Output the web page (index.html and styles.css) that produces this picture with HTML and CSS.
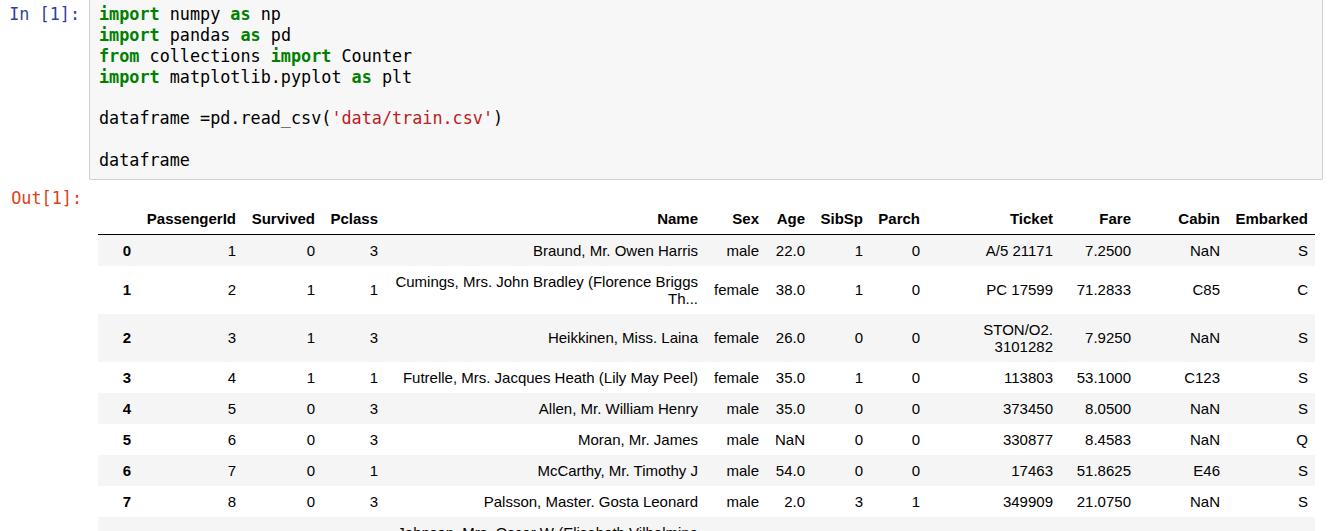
FILE: index.html
```html
<!DOCTYPE html>
<html>
<head>
<meta charset="utf-8">
<link rel="stylesheet" href="styles.css">
</head>
<body>
<div class="notebook">
  <div class="cell-row input-row">
    <div class="prompt in-prompt">In&nbsp;[1]:</div>
    <div class="input-area"><pre class="code"><span class="kw">import</span> numpy <span class="kw">as</span> np
<span class="kw">import</span> pandas <span class="kw">as</span> pd
<span class="kw">from</span> collections <span class="kw">import</span> Counter
<span class="kw">import</span> matplotlib.pyplot <span class="kw">as</span> plt

dataframe =pd.read_csv(<span class="str">'data/train.csv'</span>)

dataframe</pre></div>
  </div>
  <div class="cell-row output-row">
    <div class="prompt out-prompt">Out[1]:</div>
    <div class="output-area">
      <table class="dataframe">
        <colgroup>
          <col class="c-idx"><col class="c-pid"><col class="c-surv"><col class="c-pcl"><col class="c-name"><col class="c-sex"><col class="c-age"><col class="c-sib"><col class="c-par"><col class="c-tic"><col class="c-fare"><col class="c-cab"><col class="c-emb">
        </colgroup>
        <thead>
          <tr><th></th><th>PassengerId</th><th>Survived</th><th>Pclass</th><th>Name</th><th>Sex</th><th>Age</th><th>SibSp</th><th>Parch</th><th>Ticket</th><th>Fare</th><th>Cabin</th><th>Embarked</th></tr>
        </thead>
        <tbody>
          <tr><th>0</th><td>1</td><td>0</td><td>3</td><td>Braund, Mr. Owen Harris</td><td>male</td><td>22.0</td><td>1</td><td>0</td><td>A/5 21171</td><td>7.2500</td><td>NaN</td><td>S</td></tr>
          <tr><th>1</th><td>2</td><td>1</td><td>1</td><td>Cumings, Mrs. John Bradley (Florence Briggs Th...</td><td>female</td><td>38.0</td><td>1</td><td>0</td><td>PC 17599</td><td>71.2833</td><td>C85</td><td>C</td></tr>
          <tr><th>2</th><td>3</td><td>1</td><td>3</td><td>Heikkinen, Miss. Laina</td><td>female</td><td>26.0</td><td>0</td><td>0</td><td>STON/O2. 3101282</td><td>7.9250</td><td>NaN</td><td>S</td></tr>
          <tr><th>3</th><td>4</td><td>1</td><td>1</td><td>Futrelle, Mrs. Jacques Heath (Lily May Peel)</td><td>female</td><td>35.0</td><td>1</td><td>0</td><td>113803</td><td>53.1000</td><td>C123</td><td>S</td></tr>
          <tr><th>4</th><td>5</td><td>0</td><td>3</td><td>Allen, Mr. William Henry</td><td>male</td><td>35.0</td><td>0</td><td>0</td><td>373450</td><td>8.0500</td><td>NaN</td><td>S</td></tr>
          <tr><th>5</th><td>6</td><td>0</td><td>3</td><td>Moran, Mr. James</td><td>male</td><td>NaN</td><td>0</td><td>0</td><td>330877</td><td>8.4583</td><td>NaN</td><td>Q</td></tr>
          <tr><th>6</th><td>7</td><td>0</td><td>1</td><td>McCarthy, Mr. Timothy J</td><td>male</td><td>54.0</td><td>0</td><td>0</td><td>17463</td><td>51.8625</td><td>E46</td><td>S</td></tr>
          <tr><th>7</th><td>8</td><td>0</td><td>3</td><td>Palsson, Master. Gosta Leonard</td><td>male</td><td>2.0</td><td>3</td><td>1</td><td>349909</td><td>21.0750</td><td>NaN</td><td>S</td></tr>
          <tr><th>8</th><td>9</td><td>1</td><td>3</td><td>Johnson, Mrs. Oscar W (Elisabeth Vilhelmina Berg)</td><td>female</td><td>27.0</td><td>0</td><td>2</td><td>347742</td><td>11.1333</td><td>NaN</td><td>S</td></tr>
          <tr><th>9</th><td>10</td><td>1</td><td>2</td><td>Nasser, Mrs. Nicholas (Adele Achem)</td><td>female</td><td>14.0</td><td>1</td><td>0</td><td>237736</td><td>30.0708</td><td>NaN</td><td>C</td></tr>
        </tbody>
      </table>
    </div>
  </div>
</div>
</body>
</html>
```

FILE: styles.css
```css
html, body {
  margin: 0;
  padding: 0;
  background: #ffffff;
  overflow: hidden;
}

body {
  width: 1334px;
  height: 531px;
}

.notebook {
  display: flex;
  flex-direction: column;
}

.cell-row {
  display: flex;
  align-items: flex-start;
}

.input-row {
  margin-top: -2px;
}

.prompt {
  font-family: "DejaVu Sans Mono", monospace;
  font-size: 16.8px;
  line-height: 20.8px;
  text-align: right;
  box-sizing: border-box;
  flex: 0 0 auto;
}

.in-prompt {
  width: 89px;
  color: #303f9f;
  padding: 6px 9px 0 0;
}

.out-prompt {
  width: 89px;
  color: #d84315;
  padding: 8px 7px 0 0;
}

.input-area {
  width: 1234px;
  box-sizing: border-box;
  background: #f7f7f7;
  border: 1px solid #cfcfcf;
  border-radius: 2px;
  padding: 5px 0 8px 9px;
}

.code {
  margin: 0;
  font-family: "DejaVu Sans Mono", monospace;
  font-size: 16.8px;
  line-height: 20.85px;
  color: #000000;
}

.kw {
  color: #008000;
  font-weight: bold;
}

.str {
  color: #ba2121;
}

.output-area {
  padding: 23px 0 0 9px;
}

.dataframe {
  border-collapse: collapse;
  border-spacing: 0;
  table-layout: fixed;
  width: 1217px;
  font-family: "Liberation Sans", Arial, sans-serif;
  font-size: 15px;
  line-height: 17px;
  color: #000000;
}

.c-idx { width: 40px; }
.c-pid { width: 105px; }
.c-surv { width: 79px; }
.c-pcl { width: 63px; }
.c-name { width: 320px; }
.c-sex { width: 61px; }
.c-age { width: 46px; }
.c-sib { width: 58px; }
.c-par { width: 57px; }
.c-tic { width: 133px; }
.c-fare { width: 78px; }
.c-cab { width: 89px; }
.c-emb { width: 88px; }

.dataframe th,
.dataframe td {
  padding: 7px;
  text-align: right;
  vertical-align: middle;
}

.dataframe th {
  font-weight: bold;
}

.dataframe thead th {
  vertical-align: bottom;
  border-bottom: 1px solid #000000;
}

.dataframe tbody tr:nth-child(odd) {
  background: #f5f5f5;
}
```
